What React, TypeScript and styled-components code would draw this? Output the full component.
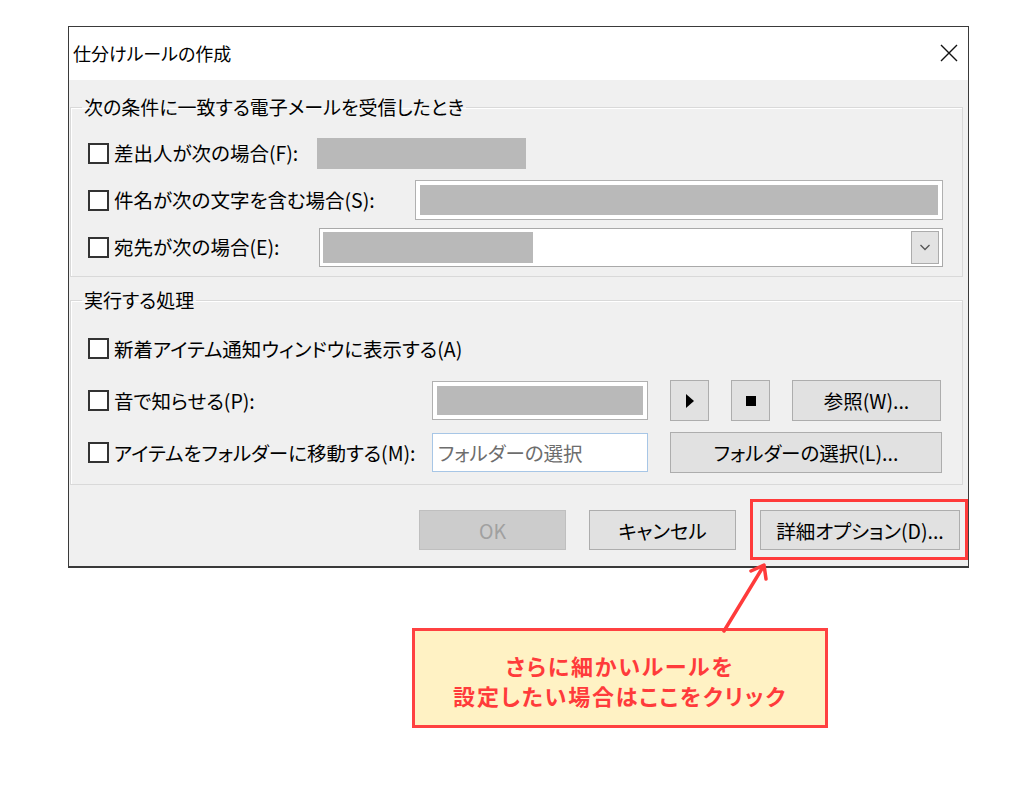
import styled, { createGlobalStyle } from 'styled-components'

const GlobalStyle = createGlobalStyle`
	html, body {
		margin: 0;
		background: #ffffff;
	}
	body {
		font-family: "Noto Sans CJK JP", "Noto Sans", sans-serif;
		font-feature-settings: "palt";
		color: #000;
	}
`

const Page = styled.div`
	width: 1024px;
	height: 800px;
	padding: 26px 0 0 68px;
	box-sizing: border-box;
`

const Dialog = styled.div`
	width: 901px;
	height: 542px;
	box-sizing: border-box;
	border: 1px solid #3a3a3a;
	border-bottom-width: 2px;
	background: #f0f0f0;
	display: flex;
	flex-direction: column;
`

const TitleBar = styled.div`
	height: 53px;
	flex-shrink: 0;
	background: #ffffff;
	display: flex;
	align-items: center;
	justify-content: space-between;
	padding: 0 10px 2px 4px;
	box-sizing: border-box;
`

const Title = styled.div`
	font-size: 18px;
	line-height: 24px;
`

const CloseButton = styled.div`
	width: 18px;
	height: 18px;
	display: flex;
`

const Body = styled.div`
	flex: 1;
	padding: 15px 5px 0 1px;
	display: flex;
	flex-direction: column;
`

const Group = styled.fieldset<{ $gap: number; $top?: number; $pad: string }>`
	margin: ${(p) => p.$top ?? 0}px 0 0 0;
	padding: ${(p) => p.$pad};
	border: 1px solid #d9d9d9;
	box-shadow: inset 1px 1px 0 #ffffff;
	display: flex;
	flex-direction: column;
	gap: ${(p) => p.$gap}px;
	min-width: 0;
`

const Legend = styled.legend`
	font-size: 19px;
	line-height: 24px;
	margin-left: -6px;
	padding: 0 2px;
`

const Row = styled.div<{ $h: number }>`
	display: flex;
	align-items: center;
	height: ${(p) => p.$h}px;
`

const CheckLabel = styled.label<{ $w?: number }>`
	display: flex;
	align-items: center;
	gap: 5px;
	flex-shrink: 0;
	width: ${(p) => (p.$w ? `${p.$w}px` : 'auto')};
	font-size: 19.5px;
	line-height: 24px;
	white-space: nowrap;
`

const Box = styled.span`
	width: 21px;
	height: 21px;
	box-sizing: border-box;
	border: 2px solid #333333;
	background: #ffffff;
	flex-shrink: 0;
`

const Redaction = styled.div<{ $w?: number; $h?: number }>`
	background: #b9b9b9;
	width: ${(p) => (p.$w ? `${p.$w}px` : 'auto')};
	height: ${(p) => (p.$h ? `${p.$h}px` : 'auto')};
	flex: ${(p) => (p.$w ? '0 0 auto' : '1')};
`

const TextField = styled.div<{ $w?: number; $h: number }>`
	display: flex;
	box-sizing: border-box;
	height: ${(p) => p.$h}px;
	width: ${(p) => (p.$w ? `${p.$w}px` : 'auto')};
	flex: ${(p) => (p.$w ? '0 0 auto' : '1')};
	border: 1px solid #b0b0b0;
	background: #ffffff;
	padding: 4px;
`

const Combo = styled.div`
	flex: 1;
	height: 39px;
	box-sizing: border-box;
	display: flex;
	align-items: center;
	justify-content: space-between;
	border: 1px solid #a9a9a9;
	background: #ffffff;
	padding: 3px;
`

const DropButton = styled.div`
	width: 28px;
	height: 33px;
	box-sizing: border-box;
	border: 1px solid #acacac;
	background: #e3e3e3;
	display: flex;
	align-items: center;
	justify-content: center;
`

const FolderInput = styled.div`
	width: 216px;
	height: 39px;
	box-sizing: border-box;
	border: 1px solid #a7c6e6;
	background: #ffffff;
	padding: 0 5px;
	display: flex;
	align-items: center;
	font-size: 19.5px;
	color: #6d6d6d;
	white-space: nowrap;
`

const Button = styled.div<{ $w: number; $h?: number; $disabled?: boolean }>`
	width: ${(p) => p.$w}px;
	height: ${(p) => p.$h ?? 40}px;
	box-sizing: border-box;
	flex-shrink: 0;
	border: 1px solid ${(p) => (p.$disabled ? '#bfbfbf' : '#adadad')};
	background: ${(p) => (p.$disabled ? '#cccccc' : '#e1e1e1')};
	color: ${(p) => (p.$disabled ? '#a0a0a0' : '#000')};
	display: flex;
	align-items: center;
	justify-content: center;
	font-size: 19.5px;
	white-space: nowrap;
`

const Controls = styled.div`
	display: flex;
	align-items: center;
	gap: 22px;
	margin-left: 22px;
`

const Footer = styled.div`
	display: flex;
	justify-content: flex-end;
	align-items: center;
	gap: 23px;
	padding: 25px 3px 0 0;
`

const Highlight = styled.div`
	position: relative;
	margin-left: 1px;
	&::after {
		content: '';
		position: absolute;
		inset: -11px -8px -10px -10px;
		border: 3px solid #ff3b3b;
		pointer-events: none;
	}
`

const Callout = styled.div`
	position: relative;
	margin: 60px 0 0 344px;
	width: 416px;
	height: 100px;
	box-sizing: border-box;
	border: 3px solid #ff4141;
	background: #fff2c4;
	display: flex;
	flex-direction: column;
	align-items: center;
	justify-content: center;
	padding-top: 4px;
	color: #ff3b3b;
	font-weight: bold;
	font-size: 22px;
	line-height: 30px;
	letter-spacing: 1.8px;
`

const Arrow = styled.svg`
	position: absolute;
	left: 300px;
	top: -72px;
`

const Chevron = () => (
	<svg width='14' height='14' viewBox='0 0 14 14'>
		<path d='M2.5 5 L7 9.5 L11.5 5' fill='none' stroke='#555' strokeWidth='1.3' />
	</svg>
)

function App() {
	return (
		<Page>
			<GlobalStyle />
			<Dialog>
				<TitleBar>
					<Title>仕分けルールの作成</Title>
					<CloseButton>
						<svg width='18' height='18' viewBox='0 0 18 18'>
							<path d='M1 1 L17 17 M17 1 L1 17' stroke='#111' strokeWidth='1.4' />
						</svg>
					</CloseButton>
				</TitleBar>
				<Body>
					{/* Conditions */}
					<Group $gap={7} $pad='14px 19px 9px 17px'>
						<Legend>次の条件に一致する電子メールを受信したとき</Legend>
						<Row $h={40}>
							<CheckLabel $w={229}>
								<Box />
								差出人が次の場合(F):
							</CheckLabel>
							<Redaction $w={209} $h={31} />
						</Row>
						<Row $h={40}>
							<CheckLabel $w={327}>
								<Box />
								件名が次の文字を含む場合(S):
							</CheckLabel>
							<TextField $h={40}>
								<Redaction />
							</TextField>
						</Row>
						<Row $h={40}>
							<CheckLabel $w={231}>
								<Box />
								宛先が次の場合(E):
							</CheckLabel>
							<Combo>
								<Redaction $w={210} $h={31} />
								<DropButton>
									<Chevron />
								</DropButton>
							</Combo>
						</Row>
					</Group>
					{/* Actions */}
					<Group $gap={11} $top={11} $pad='16px 17px 11px 17px'>
						<Legend>実行する処理</Legend>
						<Row $h={41}>
							<CheckLabel>
								<Box />
								新着アイテム通知ウィンドウに表示する(A)
							</CheckLabel>
						</Row>
						<Row $h={41}>
							<CheckLabel $w={344}>
								<Box />
								音で知らせる(P):
							</CheckLabel>
							<TextField $w={216} $h={39}>
								<Redaction />
							</TextField>
							<Controls>
								<Button $w={39} $h={41}>
									<svg width='10' height='14' viewBox='0 0 10 14'>
										<path d='M1 0 L9 7 L1 14 Z' fill='#000' />
									</svg>
								</Button>
								<Button $w={39} $h={41}>
									<svg width='10' height='10' viewBox='0 0 10 10'>
										<rect width='10' height='10' fill='#000' />
									</svg>
								</Button>
								<Button $w={149} $h={41}>
									参照(W)...
								</Button>
							</Controls>
						</Row>
						<Row $h={41}>
							<CheckLabel $w={344}>
								<Box />
								アイテムをフォルダーに移動する(M):
							</CheckLabel>
							<FolderInput>フォルダーの選択</FolderInput>
							<Controls>
								<Button $w={272} $h={41}>
									フォルダーの選択(L)...
								</Button>
							</Controls>
						</Row>
					</Group>
					<Footer>
						<Button $w={147} $disabled>
							OK
						</Button>
						<Button $w={147}>キャンセル</Button>
						<Highlight>
							<Button $w={200}>詳細オプション(D)...</Button>
						</Highlight>
					</Footer>
				</Body>
			</Dialog>
			<Callout>
				<Arrow width='60' height='74' viewBox='0 0 60 74'>
					<path d='M9 72 L48 8' stroke='#ff3b3b' strokeWidth='3.5' strokeLinecap='round' fill='none' />
					<path d='M36 12 L49 6 L51 20' stroke='#ff3b3b' strokeWidth='3.5' strokeLinecap='round' strokeLinejoin='round' fill='none' />
				</Arrow>
				<div>さらに細かいルールを</div>
				<div>設定したい場合はここをクリック</div>
			</Callout>
		</Page>
	)
}

export default App
